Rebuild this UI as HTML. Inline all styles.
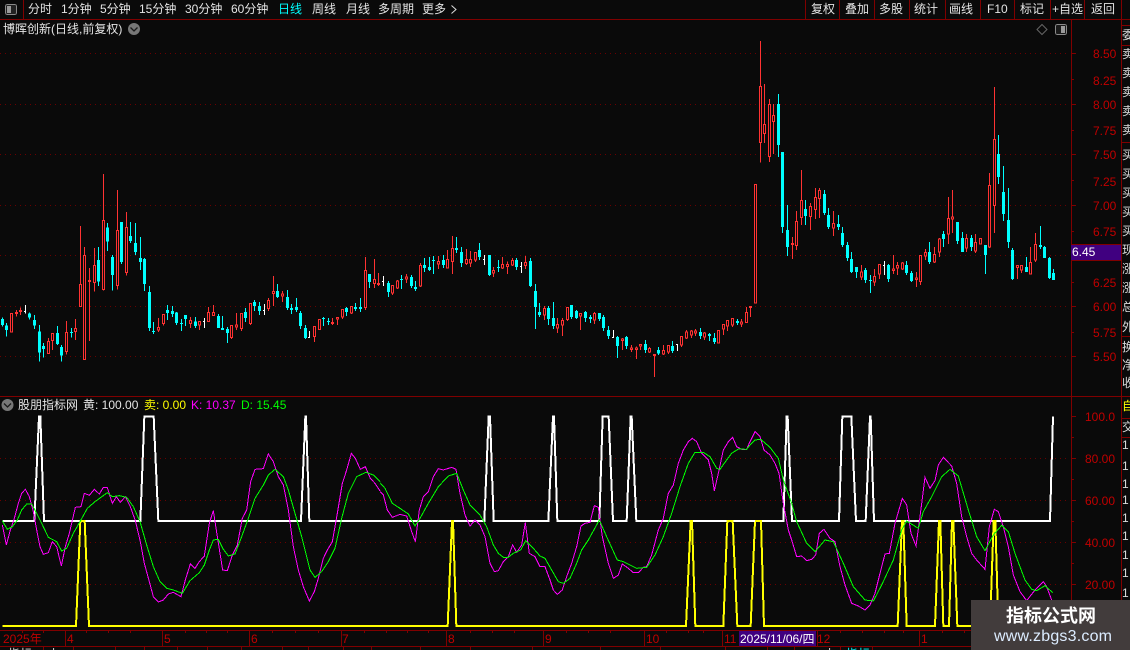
<!DOCTYPE html>
<html><head><meta charset="utf-8"><style>
html,body{margin:0;padding:0;background:#0a0a0a;width:1130px;height:650px;overflow:hidden}
svg{display:block;shape-rendering:crispEdges;font-family:"Liberation Sans","WenQuanYi Zen Hei","Noto Sans CJK SC",sans-serif}
.rw{stroke:#ff3232;stroke-width:3;fill:none}
.rb{fill:#0a0a0a;stroke:#ff3232;stroke-width:3}
.cw{stroke:#0ff;stroke-width:3;fill:none}
.cb{stroke:#0ff;stroke-width:9;fill:none}
.ww{stroke:#fff;stroke-width:3;fill:none}
.wh{stroke:#fff;stroke-width:6;fill:none}
.ye{stroke:#ff0;stroke-width:6;fill:none}
.ma{stroke:#f0f;stroke-width:3;fill:none}
.gr{stroke:#0f0;stroke-width:3;fill:none}
.ln{stroke:#800000;stroke-width:1;fill:none}
.dot{stroke:#6a0000;stroke-width:1;stroke-dasharray:1 4;fill:none}
.t{font-size:12px;fill:#e4e4e4}
.p{font-size:12px;fill:#c00000}
</style></head><body>
<svg width="1130" height="650" viewBox="0 0 1130 650" xmlns="http://www.w3.org/2000/svg">
<rect width="1130" height="650" fill="#0a0a0a"/>

<!-- grid -->
<path class="dot" d="M0 53.5H1068M0 104.5H1068M0 154.5H1068M0 205.5H1068M0 255.5H1068M0 306.5H1068M0 356.5H1068M0 458.5H1068M0 500.5H1068M0 542.5H1068M0 584.5H1068"/>

<!-- frame lines -->
<path class="ln" d="M0 19.5H1130M0 396.5H1130M0 630.5H1121M0 646.5H1121M23.5 0V19M805.5 0V19M839.5 0V19M874.5 0V19M909.5 0V19M945.5 0V19M980.5 0V19M1014.5 0V19M1050.5 0V19M1084.5 0V19M1121.5 0V650M1071.5 19V630M1121.5 25.5H1130M1121.5 45.5H1130M1121.5 142.5H1130M1121.5 336.5H1130M1121.5 418.5H1130M1121.5 437.5H1130"/>
<path class="ln" d="M1071 53.5h5M1071 79.5h3M1071 104.5h5M1071 130.5h3M1071 154.5h5M1071 180.5h3M1071 205.5h5M1071 231.5h3M1071 282.5h3M1071 306.5h5M1071 332.5h3M1071 356.5h5M1071 416.5h5M1071 437.5h3M1071 458.5h5M1071 479.5h3M1071 500.5h5M1071 521.5h3M1071 542.5h5M1071 563.5h3M1071 584.5h5M1071 605.5h3"/>
<!-- date axis separators and ticks -->
<path class="ln" d="M65.5 631V646M162.5 631V646M249.5 631V646M341.5 631V646M446.5 631V646M543.5 631V646M644.5 631V646M722.5 631V646M817.5 631V646M919.5 631V646"/>
<path class="ln" d="M22.5 631v2M43.5 631v2M86.5 631v2M108.5 631v2M130.5 631v2M185.5 631v2M206.5 631v2M227.5 631v2M272.5 631v2M295.5 631v2M318.5 631v2M364.5 631v2M386.5 631v2M407.5 631v2M428.5 631v2M470.5 631v2M492.5 631v2M514.5 631v2M566.5 631v2M588.5 631v2M610.5 631v2M666.5 631v2M688.5 631v2M703.5 631v2M840.5 631v2M862.5 631v2M884.5 631v2M903.5 631v2M942.5 631v2M964.5 631v2"/>
<path class="ln" d="M43.5 647V650M73.5 647V650M115.5 647V650M144.5 647V650M177.5 647V650M207.5 647V650M241.5 647V650M282.5 647V650M308.5 647V650M343.5 647V650M371.5 647V650M420.5 647V650M470.5 647V650M532.5 647V650M600.5 647V650M660.5 647V650M725.5 647V650M767.5 647V650M794.5 647V650M840.5 647V650M872.5 647V650"/>

<!-- candles part 1 -->
<g transform="translate(.17,160) scale(.33333)">
<path class="rw" d="M34 460V518M49 450V470M61 442V465M145 534V581M157 519V570M199 483V584M226 477V540M241 198V440M253 261V598M268 324V543M283 264V395M310 42V392M352 90V389M379 156V347M475 474V516M490 462V497M571 471V504M598 484V510M625 441V486M640 435V468M694 495V537M709 459V510M724 459V513M751 429V495M805 414V453M820 348V438M847 393V426M943 499V546M958 477V510M997 474V495M1012 471V495M1027 447V477M1054 438V462M1096 291V450M1123 297V384M1135 339V378"/>
<path class="rb" d="M31 460h6V516h-6zM46 457h6V461h-6zM58 451h6V455h-6zM142 544h6V581h-6zM154 520h6V542h-6zM196 517h6V574h-6zM223 505h6V514h-6zM238 373h6V440h-6zM250 286h6V598h-6zM265 361h6V365h-6zM280 316h6V368h-6zM307 181h6V388h-6zM349 211h6V377h-6zM376 202h6V338h-6zM472 502h6V510h-6zM487 463h6V491h-6zM568 481h6V491h-6zM595 485h6V495h-6zM622 457h6V485h-6zM637 458h6V467h-6zM691 496h6V533h-6zM706 495h6V501h-6zM721 460h6V506h-6zM748 430h6V491h-6zM802 421h6V446h-6zM817 394h6V401h-6zM844 402h6V408h-6zM940 499h6V530h-6zM955 478h6V509h-6zM994 487h6V491h-6zM1009 472h6V477h-6zM1024 448h6V471h-6zM1051 439h6V459h-6zM1093 331h6V443h-6zM1120 358h6V371h-6zM1132 370h6V374h-6z"/>
<path class="cw" d="M7 472V500M19 489V530M88 457V479M103 465V507M118 495V605M130 549V593M172 498V555M184 555V605M214 504V533M295 261V378M322 189V273M337 285V392M364 186V312M391 186V249M406 189V285M421 231V330M433 294V393M448 378V513M460 486V522M502 435V480M517 438V471M529 456V495M544 477V513M556 465V498M586 471V504M655 462V504M667 468V510M682 501V549M736 444V486M763 420V453M778 426V465M832 372V414M862 390V450M874 432V462M889 414V456M901 453V507M916 495V537M970 471V498M985 474V495M1039 441V468M1066 429V453M1081 414V456M1108 342V384"/>
<path class="cb" d="M7 477V495M19 496V510M88 460V473M103 480V497M118 514V578M130 558V567M172 519V552M184 561V587M214 516V519M295 300V365M322 202V245M337 291V345M364 186V306M391 228V243M406 249V276M421 294V306M433 297V372M448 396V504M460 513V516M502 450V459M517 453V462M529 457V489M544 489V492M556 465V477M586 484V498M655 468V504M667 504V510M682 507V519M736 456V474M763 426V438M778 438V453M832 393V411M862 411V444M874 444V450M889 441V450M901 459V498M916 504V534M970 474V477M985 483V486M1039 444V456M1066 441V447M1081 441V447M1108 342V366"/>
<path class="ww" d="M76 435V461M72 455H76M613 474V504M609 485H613M793 432V465M789 451H793M928 513V534M924 532H928"/>
</g>

<!-- candles part 2 -->
<g transform="translate(380.17,220) scale(.33333)">
<path class="rw" d="M37 195V225M52 180V207M79 162V189M121 129V201M175 108V147M202 90V144M217 48V162M259 87V135M271 93V141M286 96V126M340 141V171M367 111V147M382 125V162M397 114V138M436 108V147M493 258V300M532 294V339M547 294V348M562 261V303M601 279V330M643 276V312M727 354V390M754 375V396M769 380V417M781 373V390M808 381V399M823 402V471M850 375V405M865 375V402M904 348V381M919 330V357M934 330V354M946 327V348M973 336V360M1015 330V369M1030 312V345M1042 301V333M1057 294V321M1084 297V321M1099 261V309M1111 259V291"/>
<path class="rb" d="M34 196h6V219h-6zM49 183h6V204h-6zM76 171h6V177h-6zM118 136h6V198h-6zM172 124h6V132h-6zM199 118h6V144h-6zM214 85h6V124h-6zM256 118h6V130h-6zM268 118h6V129h-6zM283 97h6V120h-6zM337 151h6V159h-6zM364 133h6V144h-6zM379 133h6V140h-6zM394 121h6V135h-6zM433 127h6V137h-6zM490 265h6V285h-6zM529 313h6V324h-6zM544 301h6V315h-6zM559 262h6V298h-6zM598 280h6V288h-6zM640 280h6V300h-6zM724 357h6V362h-6zM751 384h6V389h-6zM766 384h6V389h-6zM778 373h6V378h-6zM805 385h6V396h-6zM820 403h6V407h-6zM847 391h6V402h-6zM862 376h6V396h-6zM901 349h6V375h-6zM916 336h6V354h-6zM931 333h6V345h-6zM943 333h6V339h-6zM970 339h6V351h-6zM1012 331h6V369h-6zM1027 313h6V327h-6zM1039 302h6V318h-6zM1054 295h6V315h-6zM1081 306h6V312h-6zM1096 277h6V308h-6zM1108 259h6V263h-6z"/>
<path class="cw" d="M25 183V231M64 165V207M94 165V204M106 183V213M133 114V156M148 111V153M160 108V162M190 105V144M229 51V99M244 81V141M298 69V120M328 105V168M355 120V156M409 114V150M451 114V201M466 192V327M478 249V291M505 258V315M520 246V327M574 255V297M589 270V297M616 273V306M631 285V309M658 279V303M670 285V333M685 318V357M712 348V414M739 348V387M796 360V399M835 381V405M877 363V399M961 324V357M988 339V363M1003 339V372M1072 297V315"/>
<path class="cb" d="M25 189V216M64 177V180M94 171V198M106 201V207M133 135V144M148 141V150M160 120V123M190 120V135M229 84V90M244 96V129M298 90V111M328 105V165M355 141V144M409 120V141M451 123V198M466 213V261M478 276V285M505 264V297M520 294V318M574 255V291M589 273V294M616 276V294M631 291V297M658 279V297M670 291V324M685 330V348M712 351V378M739 351V378M796 372V390M835 390V400M877 378V393M961 336V348M988 342V348M1003 354V366M1072 303V309"/>
<path class="ww" d="M10 168V198M6 184H10M313 105V135M309 119H313M424 126V159M420 140H424M700 330V354M696 352H700M892 372V393M888 374H892"/>
</g>

<!-- candles part 3 -->
<g transform="translate(740.17,30) scale(.33333)">
<path class="rw" d="M61 33V398M73 162V339M88 207V396M100 222V372M157 621V687M169 543V660M184 420V585M211 519V600M226 474V567M238 474V564M280 543V618M364 705V750M403 717V768M418 702V747M460 675V732M472 696V735M487 696V720M529 726V771M541 675V765M556 657V690M583 651V699M598 624V681M625 501V642M637 480V609M679 612V666M706 612V669M748 429V654M763 171V609M832 705V747M844 705V729M871 651V732M886 609V696"/>
<path class="rb" d="M43 463h6V819h-6zM58 169h6V338h-6zM70 283h6V311h-6zM85 223h6V380h-6zM97 256h6V275h-6zM154 640h6V644h-6zM166 574h6V647h-6zM181 511h6V563h-6zM208 529h6V560h-6zM223 502h6V539h-6zM235 481h6V505h-6zM277 580h6V594h-6zM361 726h6V741h-6zM400 739h6V756h-6zM415 703h6V732h-6zM457 717h6V722h-6zM469 706h6V714h-6zM484 699h6V717h-6zM526 744h6V749h-6zM538 676h6V755h-6zM553 667h6V678h-6zM580 673h6V696h-6zM595 627h6V666h-6zM622 565h6V612h-6zM634 561h6V567h-6zM676 625h6V654h-6zM703 637h6V663h-6zM718 625h6V642h-6zM745 466h6V651h-6zM760 328h6V527h-6zM829 706h6V713h-6zM841 706h6V720h-6zM868 697h6V732h-6zM883 643h6V690h-6z"/>
<path class="cw" d="M115 192V381M127 366V609M142 525V678M196 510V585M253 480V555M265 534V597M295 555V600M307 591V651M322 636V693M334 666V729M349 711V744M376 714V759M391 735V789M445 702V756M499 693V735M514 723V756M568 636V702M610 603V651M652 576V642M667 606V666M694 615V663M736 645V732M775 315V462M790 408V573M805 474V654M817 654V750M859 681V726M901 588V657M913 648V684M928 681V747M940 717V750"/>
<path class="cb" d="M115 222V345M127 366V591M142 600V651M196 537V558M253 492V549M265 555V591M295 582V591M307 609V645M322 645V684M334 687V726M349 711V726M376 720V750M391 750V753M445 705V747M499 705V729M514 729V753M568 666V696M610 612V627M652 576V633M667 624V666M694 624V651M736 645V675M775 372V441M790 486V552M805 570V636M817 660V747M859 711V726M901 645V651M913 651V684M928 684V744M940 729V750"/>
<path class="ww" d="M433 693V735M429 707H433"/>
</g>

<!-- indicator lines part 1 -->
<g transform="translate(0,390) scale(.33333)">
<polyline class="wh" points="7,393 103,393 117,80 121,80 132,393 421,393 433,80 461,80 475,393 903,393 916,80 918,80 928,393 1140,393"/>
<polyline class="ye" points="7,708 228,708 241,393 254,393 267,708 1140,708"/>
<polyline class="ma" points="7,405 19,465 31,420 43,385 55,340 65,310 76,298 88,320 100,365 112,430 120,470 130,493 145,488 157,455 170,470 184,528 196,470 208,430 226,352 243,350 253,310 268,316 283,298 298,312 310,292 322,293 337,340 349,320 361,337 376,320 391,350 406,392 421,455 433,520 448,575 460,620 475,636 490,630 505,612 520,607 543,620 556,570 571,522 585,535 598,515 613,498 628,400 640,362 652,440 668,540 682,542 697,495 712,465 727,385 740,360 752,275 765,238 790,236 805,192 820,215 835,260 850,285 865,360 880,470 895,540 910,590 928,633 943,605 955,565 970,505 982,480 997,455 1012,370 1027,280 1040,240 1054,190 1066,205 1081,238 1096,230 1111,265 1125,280 1140,303"/>
<polyline class="gr" points="7,393 22,418 37,410 52,390 65,360 80,342 95,342 110,370 125,400 145,442 170,455 185,483 200,475 220,430 240,395 262,355 285,335 322,308 337,320 358,317 380,322 400,350 420,395 440,465 460,530 480,575 500,595 520,600 547,610 570,572 598,548 613,525 628,480 640,450 655,448 670,478 685,498 705,492 725,440 745,385 765,325 790,285 805,255 825,238 850,260 865,300 885,370 905,440 930,540 945,562 965,545 985,515 1005,475 1025,385 1045,310 1070,260 1098,247 1120,255 1140,275"/>
</g>
<!-- indicator lines part 2 -->
<g transform="translate(380,390) scale(.33333)">
<polyline class="wh" points="0,393 313,393 326,80 330,80 341,393 505,393 519,80 522,80 532,393 658,393 668,80 686,80 699,393 740,393 752,80 755,80 769,393 1140,393"/>
<polyline class="ye" points="0,708 203,708 216,393 219,393 229,708 918,708 932,393 936,393 946,708 1030,708 1042,393 1058,393 1072,708 1112,708 1125,393 1140,393"/>
<polyline class="ma" points="0,305 10,315 22,360 37,382 60,373 80,378 95,425 106,455 118,360 130,320 145,305 160,260 175,236 190,240 215,232 228,238 240,310 255,375 270,408 285,390 300,405 315,440 330,520 343,545 355,542 370,515 385,500 398,465 410,487 425,465 436,398 448,490 465,500 480,530 495,530 510,570 520,600 532,613 547,600 560,560 575,520 590,470 603,408 615,400 630,397 643,347 655,352 667,440 685,520 700,565 715,555 727,522 745,535 760,548 775,548 790,532 800,530 815,495 835,420 850,385 865,310 880,285 895,220 910,180 925,155 937,145 950,155 965,190 985,210 995,250 1003,302 1015,250 1030,180 1045,155 1058,142 1070,170 1085,178 1100,178 1110,155"/>
<polyline class="gr" points="0,278 15,295 37,340 60,355 85,372 105,408 120,385 145,340 175,290 205,258 230,250 250,300 270,345 300,375 320,410 340,465 355,490 370,502 385,502 400,490 422,480 437,452 460,475 480,498 495,505 515,540 535,575 550,580 570,565 590,520 605,480 625,450 658,390 680,440 712,510 730,515 770,535 800,532 825,495 850,440 875,370 900,290 925,220 945,187 970,187 990,200 1010,235 1020,238 1040,210 1055,190 1075,177 1100,178 1110,165"/>
</g>
<!-- indicator lines part 3 -->
<g transform="translate(750,390) scale(.33333)">
<polyline class="wh" points="0,393 100,393 110,80 113,80 126,393 267,393 277,80 304,80 318,393 347,393 360,80 362,80 372,393 900,393 909,80"/>
<polyline class="ye" points="15,393 33,393 42,708 443,708 456,393 460,393 470,708 555,708 567,393 571,393 580,708 597,708 606,393 610,393 622,708 720,708 731,393 736,393 745,708 1000,708"/>
<polyline class="ma" points="0,155 15,125 30,140 42,180 60,195 75,220 87,250 100,340 115,420 125,450 140,500 155,498 170,512 185,508 197,495 208,430 222,418 240,445 255,455 270,530 285,585 305,640 325,648 345,660 360,645 375,610 390,550 405,492 418,490 435,400 457,325 470,345 483,430 498,468 510,380 525,262 540,295 555,272 565,225 580,202 605,228 620,280 635,380 650,440 665,490 680,510 705,538 718,410 733,358 745,365 760,410 775,470 790,555 810,605 830,632 855,600 880,575 890,590 905,630"/>
<polyline class="gr" points="0,165 15,150 32,148 60,172 85,205 100,270 125,340 140,395 170,460 195,485 225,450 250,455 280,520 310,590 345,630 370,633 395,585 430,510 455,420 470,393 505,415 520,365 545,320 575,260 600,238 625,258 655,360 680,440 705,482 730,435 755,406 775,425 795,490 825,570 845,598 860,602 885,587 908,608"/>
</g>

<!-- top toolbar -->
<rect x="5.5" y="4.5" width="11" height="10" rx="2" fill="#222" stroke="#8a8a8a"/>
<rect x="7" y="6" width="4" height="7" fill="#9a9a9a"/>
<text class="t" x="28" y="13">分时</text>
<text class="t" x="61" y="13">1分钟</text>
<text class="t" x="100" y="13">5分钟</text>
<text class="t" x="139" y="13">15分钟</text>
<text class="t" x="185" y="13">30分钟</text>
<text class="t" x="231" y="13">60分钟</text>
<text class="t" x="278" y="13" style="fill:#0ff">日线</text>
<text class="t" x="312" y="13">周线</text>
<text class="t" x="346" y="13">月线</text>
<text class="t" x="378" y="13">多周期</text>
<text class="t" x="422" y="13">更多</text>
<path d="M451.5 5.5L456 9.5L451.5 13.5" fill="none" stroke="#dcdcdc" style="shape-rendering:auto"/>
<text class="t" x="811" y="13">复权</text>
<text class="t" x="845" y="13">叠加</text>
<text class="t" x="879" y="13">多股</text>
<text class="t" x="914" y="13">统计</text>
<text class="t" x="949" y="13">画线</text>
<text class="t" x="987" y="13">F10</text>
<text class="t" x="1020" y="13">标记</text>
<text class="t" x="1052" y="13">+自选</text>
<text class="t" x="1091" y="13">返回</text>

<!-- title row -->
<text class="t" x="3" y="33">博晖创新(日线,前复权)</text>
<circle cx="134" cy="29" r="6" fill="#777" style="shape-rendering:auto"/>
<path d="M130.5 27.5L134 31L137.5 27.5" fill="none" stroke="#1a1a1a" stroke-width="1.3" style="shape-rendering:auto"/>
<path d="M1042 24.5L1047 29.5L1042 34.5L1037 29.5Z" fill="none" stroke="#666" style="shape-rendering:auto"/>
<rect x="1055.5" y="24.5" width="11" height="10" rx="2" fill="#1a1a1a" stroke="#8a8a8a"/>
<rect x="1061" y="26" width="4" height="7" fill="#9a9a9a"/>

<!-- price axis -->
<text class="p" x="1093" y="58">8.50</text>
<text class="p" x="1093" y="85">8.25</text>
<text class="p" x="1093" y="109">8.00</text>
<text class="p" x="1093" y="135">7.75</text>
<text class="p" x="1093" y="159">7.50</text>
<text class="p" x="1093" y="186">7.25</text>
<text class="p" x="1093" y="210">7.00</text>
<text class="p" x="1093" y="236">6.75</text>
<text class="p" x="1093" y="287">6.25</text>
<text class="p" x="1093" y="311">6.00</text>
<text class="p" x="1093" y="337">5.75</text>
<text class="p" x="1093" y="361">5.50</text>
<rect x="1071" y="245" width="50" height="15" fill="#400080"/>
<path class="ln" d="M1071 244.5H1121M1071 260.5H1121"/>
<text x="1072" y="256" style="font-size:12px;fill:#fff">6.45</text>

<!-- lower axis -->
<text class="p" x="1085" y="421">100.0</text>
<text class="p" x="1085" y="463">80.00</text>
<text class="p" x="1085" y="505">60.00</text>
<text class="p" x="1085" y="547">40.00</text>
<text class="p" x="1085" y="589">20.00</text>

<!-- indicator title -->
<circle cx="7.5" cy="405" r="6" fill="#777" style="shape-rendering:auto"/>
<path d="M4 403.5L7.5 407L11 403.5" fill="none" stroke="#1a1a1a" stroke-width="1.3" style="shape-rendering:auto"/>
<text class="t" x="18" y="409">股朋指标网</text>
<text class="t" x="83" y="409">黄: 100.00</text>
<text class="t" x="144" y="409" style="fill:#ff0">卖: 0.00</text>
<text class="t" x="191" y="409" style="fill:#f0f">K: 10.37</text>
<text class="t" x="241" y="409" style="fill:#0f0">D: 15.45</text>

<!-- date axis labels -->
<text class="p" x="3" y="643">2025年</text>
<text class="p" x="67" y="643">4</text>
<text class="p" x="164" y="643">5</text>
<text class="p" x="251" y="643">6</text>
<text class="p" x="342" y="643">7</text>
<text class="p" x="448" y="643">8</text>
<text class="p" x="545" y="643">9</text>
<text class="p" x="646" y="643">10</text>
<text class="p" x="724" y="643">11</text>
<rect x="739" y="631" width="77" height="15" fill="#400080"/>
<text x="740" y="643" style="font-size:12px;fill:#fff">2025/11/06/四</text>
<text class="p" x="817" y="643">12</text>
<text class="p" x="921" y="643">1</text>

<!-- bottom clipped row -->
<text x="8" y="658" style="font-size:12px;fill:#ddd">指标</text>
<text x="48" y="658" style="font-size:12px;fill:#ddd">上</text>
<text x="824" y="658" style="font-size:12px;fill:#ddd">上</text>
<text x="846" y="658" style="font-size:12px;fill:#0ff">指标</text>

<!-- right clipped column -->
<svg x="1122" y="20" width="8" height="630" viewBox="1122 20 8 630" style="font-size:12px">
<g fill="#dcdcdc">
<text x="1122" y="39">委</text>
<text x="1122" y="58">卖</text><text x="1122" y="77">卖</text><text x="1122" y="96">卖</text><text x="1122" y="115">卖</text><text x="1122" y="134">卖</text>
<text x="1122" y="159">买</text><text x="1122" y="178">买</text><text x="1122" y="197">买</text><text x="1122" y="216">买</text><text x="1122" y="235">买</text>
<text x="1122" y="254">现</text><text x="1122" y="273">涨</text><text x="1122" y="292">涨</text><text x="1122" y="311">总</text><text x="1122" y="331">外</text><text x="1122" y="351">换</text><text x="1122" y="369">净</text><text x="1122" y="387">收</text>
<text x="1122" y="431">交</text>
<text x="1122" y="449">1</text><text x="1122" y="470">1</text><text x="1122" y="488">1</text><text x="1122" y="504">1</text><text x="1122" y="522">1</text><text x="1122" y="540">1</text><text x="1122" y="559">1</text><text x="1122" y="577">1</text><text x="1122" y="597">1</text>
</g>
<text x="1122" y="410" fill="#ff0">自</text>
</svg>

<!-- watermark -->
<rect x="971" y="600" width="159" height="50" fill="#423c3c"/>
<text x="1051" y="622" text-anchor="middle" style="font-size:18px;font-weight:bold;fill:#fff;shape-rendering:auto">指标公式网</text>
<text x="994" y="641" style="font-size:16px;letter-spacing:.2px;fill:#dcecff">www.zbgs3.com</text>
</svg>
</body></html>
